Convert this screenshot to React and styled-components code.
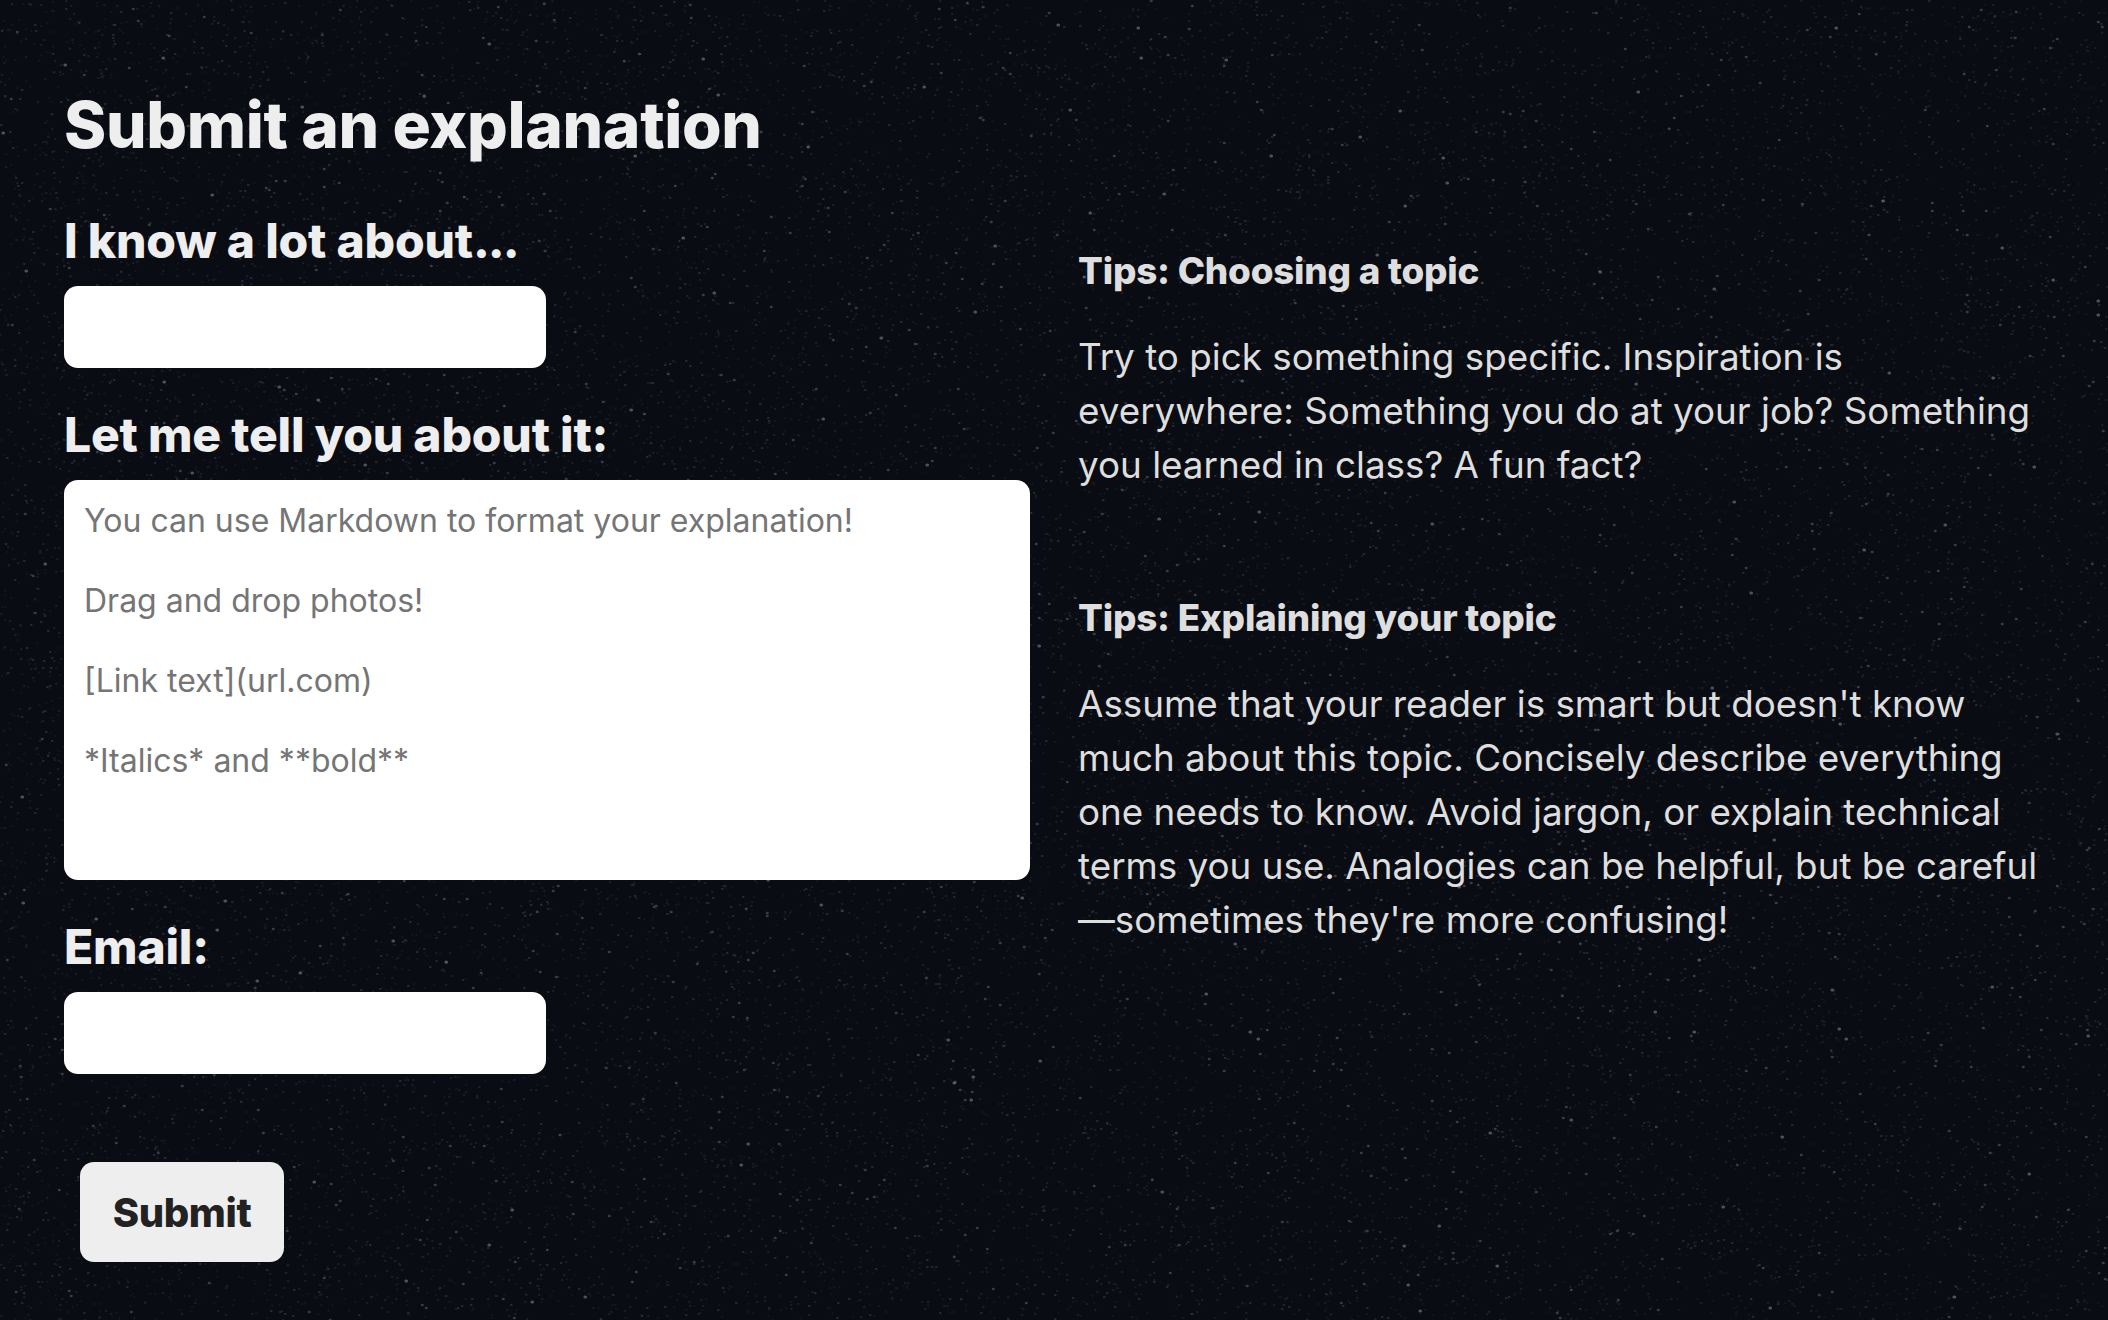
import React from 'react';
import styled, {createGlobalStyle} from 'styled-components';

// seeded so the star field comes out the same on every load
const makeStars = (w, h, count) => {
  let seed = 48271;
  const rand = () => {
    seed = (seed * 16807) % 2147483647;
    return seed / 2147483647;
  };
  // [stroke width, opacity, share of the stars]
  const layers = [
    [1.8, 0.06, 0.52],
    [2, 0.1, 0.32],
    [2.2, 0.16, 0.12],
    [2.6, 0.26, 0.035],
    [3.2, 0.38, 0.005],
  ];
  const paths = layers.map(([width, alpha, share]) => {
    let d = '';
    const n = Math.round(count * share);
    for (let i = 0; i < n; i++) {
      d += `M${Math.round(rand() * w)} ${Math.round(rand() * h)}h.5`;
    }
    return `<path d="${d}" stroke-width="${width}" stroke-opacity="${alpha}"/>`;
  });
  const svg = `<svg xmlns="http://www.w3.org/2000/svg" width="${w}" height="${h}"><filter id="soft"><feGaussianBlur stdDeviation="0.45"/></filter><g filter="url(#soft)" fill="none" stroke="#b8c2dc" stroke-linecap="round">${paths.join('')}</g></svg>`;
  return `data:image/svg+xml,${encodeURIComponent(svg)}`;
};

const stars = makeStars(2108, 1320, 30000);

const GlobalStyle = createGlobalStyle`
  html, body {
    margin: 0;
    padding: 0;
    background: #0a0c13;
  }
  * {
    box-sizing: border-box;
  }
`;

const Page = styled.div`
  min-height: 1320px;
  padding: 88px 64px 0;
  background-color: #0a0c13;
  background-image: url("${stars}");
  color: #eeeeee;
  font-family: Inter, "Liberation Sans", sans-serif;
`;

const Title = styled.h1`
  margin: 0 0 50px;
  font-size: 64px;
  line-height: 74px;
  font-weight: 800;
  letter-spacing: -0.35px;
`;

const Columns = styled.div`
  display: grid;
  grid-template-columns: 966px 966px;
  column-gap: 48px;
`;

const Form = styled.form`
  display: flex;
  flex-direction: column;
  align-items: flex-start;
`;

const Label = styled.label`
  display: block;
  margin-bottom: 16px;
  font-size: 48px;
  line-height: 58px;
  font-weight: 800;
  letter-spacing: -0.2px;
`;

const Dots = styled.span`
  letter-spacing: -2px;
`;

const TextInput = styled.input`
  display: block;
  width: 482px;
  height: 82px;
  margin-bottom: 38px;
  border: none;
  border-radius: 14px;
  background: #ffffff;
`;

const TextArea = styled.textarea`
  display: block;
  width: 966px;
  height: 400px;
  margin-bottom: 38px;
  padding: 21px 20px 20px;
  border: none;
  border-radius: 14px;
  background: #ffffff;
  font-family: inherit;
  font-size: 32px;
  line-height: 40px;
  resize: none;
  &::placeholder {
    color: #757575;
    opacity: 1;
  }
`;

const SubmitButton = styled.button`
  width: 204px;
  height: 100px;
  margin: 50px 0 0 16px;
  border: none;
  border-radius: 14px;
  background: #eeeeee;
  color: #222222;
  font-family: inherit;
  font-size: 40px;
  font-weight: 800;
  letter-spacing: -0.4px;
`;

const Tips = styled.aside`
  padding-top: 35px;
`;

const TipBlock = styled.section`
  margin-bottom: 102px;
`;

const TipHeading = styled.h3`
  margin: 0 0 35px;
  font-size: 36.8px;
  line-height: 48px;
  font-weight: 800;
  letter-spacing: -0.2px;
  color: #dedede;
`;

const TipText = styled.p`
  margin: 0;
  font-size: 36.8px;
  line-height: 54px;
  font-weight: 400;
  color: #dedede;
`;

const placeholder = `You can use Markdown to format your explanation!

Drag and drop photos!

[Link text](url.com)

*Italics* and **bold**`;

export default function App() {
  return (
    <Page>
      <GlobalStyle />
      <Title>Submit an explanation</Title>
      <Columns>
        <Form>
          <Label>I know a lot about<Dots>...</Dots></Label>
          <TextInput type="text" />
          <Label>Let me tell you about it:</Label>
          <TextArea placeholder={placeholder} />
          <Label>Email:</Label>
          <TextInput type="email" />
          <SubmitButton type="button">Submit</SubmitButton>
        </Form>
        <Tips>
          <TipBlock>
            <TipHeading>Tips: Choosing a topic</TipHeading>
            <TipText>
              Try to pick something specific. Inspiration is everywhere: Something you do at your
              job? Something you learned in class? A fun fact?
            </TipText>
          </TipBlock>
          <TipBlock>
            <TipHeading>Tips: Explaining your topic</TipHeading>
            <TipText>
              Assume that your reader is smart but doesn't know much about this topic. Concisely
              describe everything one needs to know. Avoid jargon, or explain technical terms you
              use. Analogies can be helpful, but be careful—sometimes they're more confusing!
            </TipText>
          </TipBlock>
        </Tips>
      </Columns>
    </Page>
  );
}
